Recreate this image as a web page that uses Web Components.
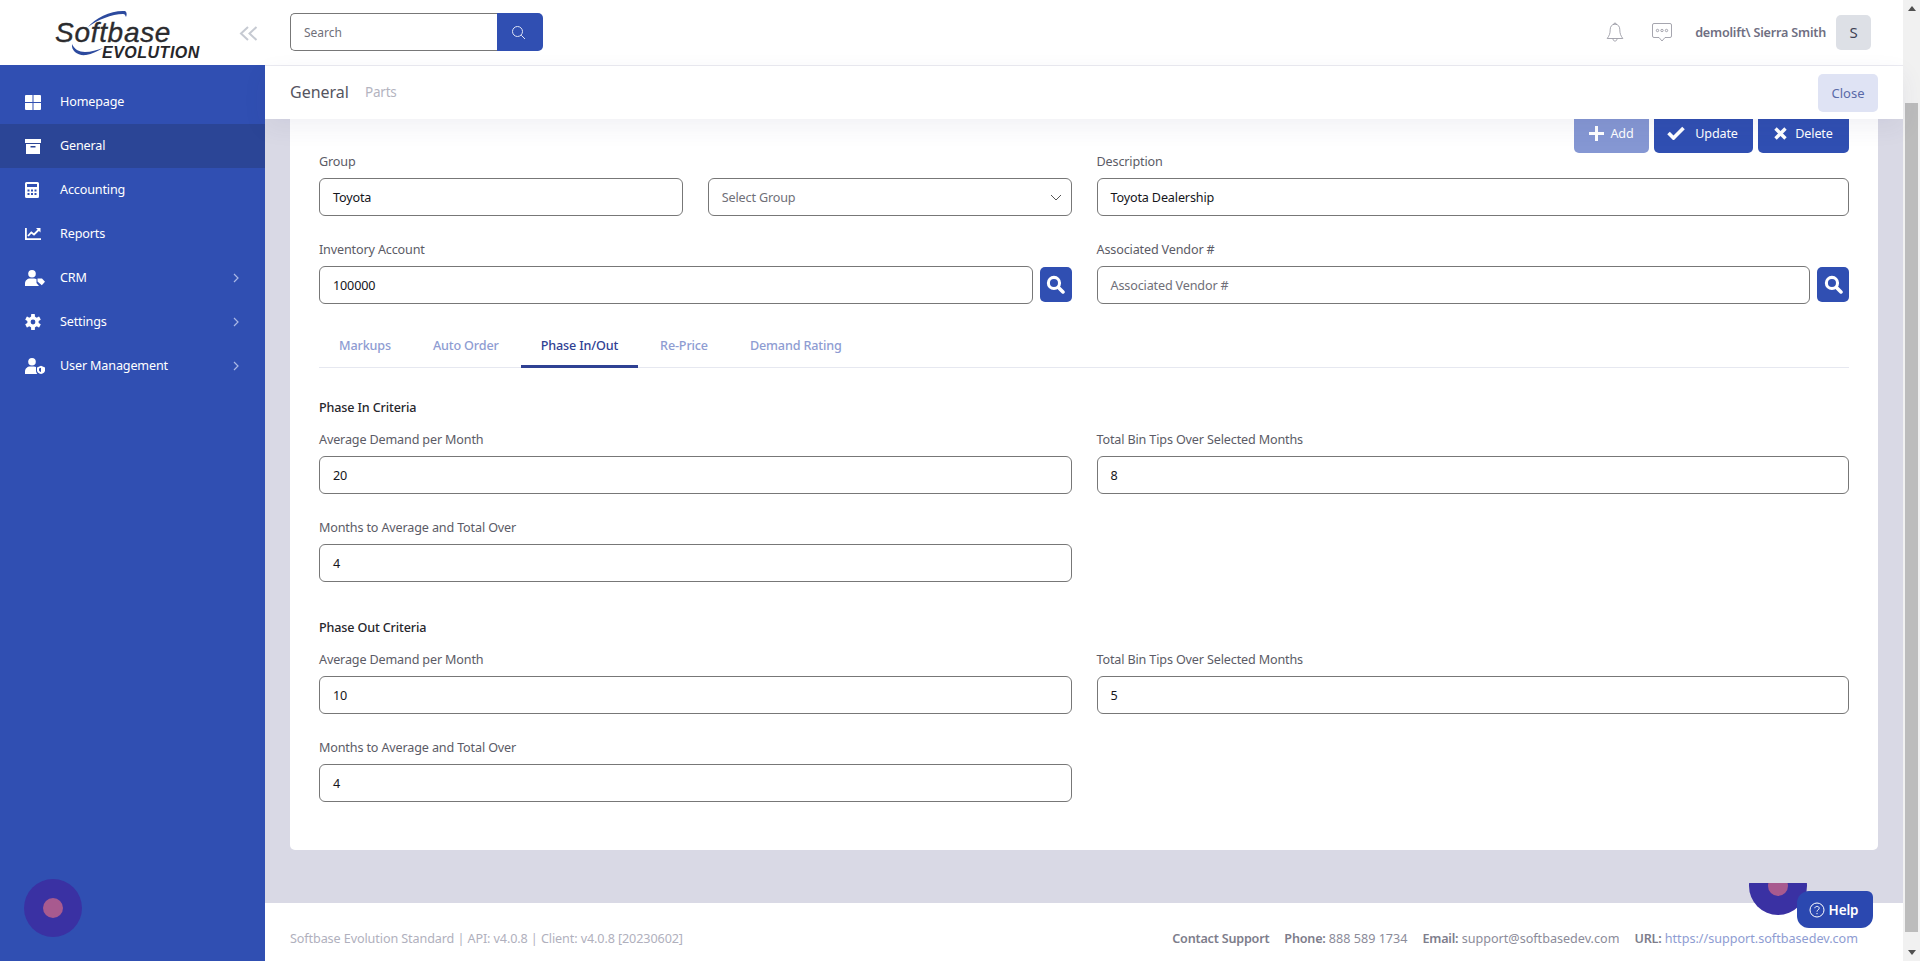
<!DOCTYPE html>
<html lang="en">
<head>
<meta charset="utf-8">
<title>Softbase Evolution</title>
<style>
  html, body { margin: 0; height: 100%; overflow: hidden; }
  body { font-family: "Noto Sans", "Open Sans", sans-serif; font-size: 12.6px; letter-spacing: -.15px; }
</style>
</head>
<body>
<sb-app>
  <sb-sidebar slot="side">
    <sb-nav-item icon="home" label="Homepage"></sb-nav-item>
    <sb-nav-item icon="box" label="General" active></sb-nav-item>
    <sb-nav-item icon="calc" label="Accounting"></sb-nav-item>
    <sb-nav-item icon="chart" label="Reports"></sb-nav-item>
    <sb-nav-item icon="crm" label="CRM" more></sb-nav-item>
    <sb-nav-item icon="cog" label="Settings" more></sb-nav-item>
    <sb-nav-item icon="shield" label="User Management" more></sb-nav-item>
  </sb-sidebar>
  <sb-topbar slot="top"></sb-topbar>
  <sb-subbar slot="sub"></sb-subbar>
  <sb-card slot="main">
    <sb-actions></sb-actions>
    <sb-row>
      <sb-row class="pair">
        <sb-field label="Group" value="Toyota"></sb-field>
        <sb-field label="&nbsp;" value="Select Group" select></sb-field>
      </sb-row>
      <sb-field label="Description" value="Toyota Dealership"></sb-field>
      <sb-field label="Inventory Account" value="100000" search></sb-field>
      <sb-field label="Associated Vendor #" placeholder="Associated Vendor #" search></sb-field>
    </sb-row>
    <sb-tabs></sb-tabs>
    <sb-heading>Phase In Criteria</sb-heading>
    <sb-row>
      <sb-field label="Average Demand per Month" value="20"></sb-field>
      <sb-field label="Total Bin Tips Over Selected Months" value="8"></sb-field>
      <sb-field label="Months to Average and Total Over" value="4"></sb-field>
    </sb-row>
    <sb-heading class="second">Phase Out Criteria</sb-heading>
    <sb-row>
      <sb-field label="Average Demand per Month" value="10"></sb-field>
      <sb-field label="Total Bin Tips Over Selected Months" value="5"></sb-field>
      <sb-field label="Months to Average and Total Over" value="4"></sb-field>
    </sb-row>
  </sb-card>
  <sb-footer slot="foot"></sb-footer>
  <sb-scrollbar slot="scroll"></sb-scrollbar>
  <sb-bubble class="left"></sb-bubble>
  <sb-help></sb-help>
</sb-app>

<script>
const ICONS = {
    home: `<svg width="16" height="15" viewBox="0 0 16 15"><path fill="#fff" d="M1 0h6.500v7H0V1a1 1 0 0 1 1-1zM8.500 0H15a1 1 0 0 1 1 1v6H8.500zM0 8h7.500v7H1a1 1 0 0 1-1-1zM8.500 8H16v6a1 1 0 0 1-1 1H8.500z"/></svg>`,
    box: `<svg width="16" height="15" viewBox="0 0 16 15"><path fill="#fff" fill-rule="evenodd" d="M0 0h16v4H0zM1 5h14v10H1zM5.500 7v1.500h5V7z"/></svg>`,
    calc: `<svg width="14" height="16" viewBox="0 0 14 16"><path fill="#fff" fill-rule="evenodd" d="M1.500 0h11A1.500 1.500 0 0 1 14 1.500v13a1.500 1.500 0 0 1-1.500 1.500h-11A1.500 1.500 0 0 1 0 14.500v-13A1.500 1.500 0 0 1 1.500 0zM2 2v3h10V2zM2.500 7.500v2h2v-2zM6 7.500v2h2v-2zM9.500 7.500v2h2v-2zM2.500 11v2h2v-2zM6 11v2h2v-2zM9.500 11v2h2v-2z"/></svg>`,
    chart: `<svg width="16" height="12" viewBox="0 0 16 12"><path fill="#fff" d="M0 0h1.800v10.200H16V12H0z"/><path fill="none" stroke="#fff" stroke-width="1.800" d="M3 8l3.300-3.500 2.700 2 5-5"/><path fill="#fff" d="M11 0h4.500v4.500z"/></svg>`,
    crm: `<svg width="20" height="16" viewBox="0 0 20 16"><circle cx="7" cy="3.800" r="3.800" fill="#fff"/><path fill="#fff" d="M0 16v-2.500C0 10.500 2.500 8.500 5 8.500h4c1 0 1.800.3 2.500.7V13l2.500 3z"/><path fill="#fff" d="M12.500 8.500H17l3 3.300-3.200 3.400-4.300-3.800z"/></svg>`,
    cog: `<svg width="16" height="16" viewBox="0 0 16 16"><g fill="#fff"><rect x="6.100" y="0" width="3.800" height="16" rx=".6"/><rect x="6.100" y="0" width="3.800" height="16" rx=".6" transform="rotate(60 8 8)"/><rect x="6.100" y="0" width="3.800" height="16" rx=".6" transform="rotate(120 8 8)"/></g><circle cx="8" cy="8" r="4.200" fill="none" stroke="#fff" stroke-width="3"/><circle cx="8" cy="8" r="2.400" fill="#304fb2"/></svg>`,
    shield: `<svg width="20" height="16" viewBox="0 0 20 16"><circle cx="7" cy="3.800" r="3.800" fill="#fff"/><path fill="#fff" d="M0 16v-2.500C0 10.500 2.500 8.500 5 8.500h4c.8 0 1.500.2 2 .5v3.500c0 1.300.5 2.500 1.300 3.500z"/><path fill="#fff" d="M16 7.800l4 1.600v3c0 1.800-1.700 3-4 3.600-2.300-.6-4-1.800-4-3.600v-3z"/><path fill="#304fb2" d="M16 9.800v4.300c-1.100-.4-2-1-2-2v-1.500z"/></svg>`,
    search: `<svg width="19" height="19" viewBox="0 0 16 16"><circle cx="6.700" cy="6.700" r="4.700" fill="none" stroke="#fff" stroke-width="2.600"/><path stroke="#fff" stroke-width="3" stroke-linecap="round" d="M10.500 10.500 14.300 14.300"/></svg>`,
};

// Small base class: each element hands back its own styles and markup
class SbElement extends HTMLElement {
    constructor() {
        super();
        this.attachShadow({mode: 'open'});
    }

    connectedCallback() {
        const template = document.createElement('template');
        template.innerHTML = this.template();
        this.shadowRoot.appendChild(template.content.cloneNode(true));
    }
}

class SbApp extends SbElement {
    template() {
        return `
        <style>
          :host {
             display: grid;
             grid-template-columns: 265px 1fr 17px;
             grid-template-rows: 66px 53px 1fr 58px;
             height: 961px;
             position: relative;
             overflow: hidden;
             background: #d9d9e5;
          }
          ::slotted([slot=side]) { grid-column: 1; grid-row: 1 / 5; }
          ::slotted([slot=top]) { grid-column: 2; grid-row: 1; z-index: 2; }
          ::slotted([slot=sub]) { grid-column: 2; grid-row: 2; z-index: 2; }
          ::slotted([slot=foot]) { grid-column: 2; grid-row: 4; }
          ::slotted([slot=scroll]) { grid-column: 3; grid-row: 1 / 5; }
          #content {
             grid-column: 2;
             grid-row: 3;
             overflow: hidden;
             min-height: 0;
             display: flex;
             flex-direction: column;
             justify-content: flex-end;
             padding: 0 25px 53px;
          }
        </style>
        <slot name="side"></slot>
        <slot name="top"></slot>
        <slot name="sub"></slot>
        <div id="content"><slot name="main"></slot></div>
        <slot name="foot"></slot>
        <slot name="scroll"></slot>
        <slot></slot>
        `;
    }
}

class SbSidebar extends SbElement {
    template() {
        return `
        <style>
          :host { display: flex; flex-direction: column; background: #304fb2; }
          #brand {
             height: 65px;
             background: #fff;
             display: flex;
             flex: none;
          }
          nav { padding-top: 15px; display: flex; flex-direction: column; }
        </style>
        <div id="brand">
          <svg width="265" height="65" viewBox="0 0 265 65">
            <path fill="#2c4a9e" d="M88 27C95 18 112 10 125 11c2 1 2 4 1 6-1-2-1-3-3-3-11 0-26 6-35 13z"/>
            <path fill="#2c4a9e" d="M72 44c-1 7 6 12 14 11 6-1 12-4 17-7-6 2-12 4-18 4-6 0-11-3-13-8z"/>
            <text x="55" y="42" font-family="Liberation Sans" font-style="italic" font-size="28" fill="#2b2b2e" stroke="#2b2b2e" stroke-width=".35" letter-spacing=".7">Softbase</text>
            <text x="102" y="58" font-family="Liberation Sans" font-style="italic" font-weight="700" font-size="16" fill="#26262a" letter-spacing=".5">EVOLUTION</text>
            <path fill="none" stroke="#c6cad2" stroke-width="2" d="M248 27l-7 6.500 7 6.500M256.500 27l-7 6.500 7 6.500"/>
          </svg>
        </div>
        <nav><slot></slot></nav>
        `;
    }
}

class SbNavItem extends SbElement {
    template() {
        const more = this.hasAttribute('more')
            ? `<svg id="more" width="6" height="10" viewBox="0 0 6 10"><path fill="none" stroke="#aab8e6" stroke-width="1.200" d="M1 1l4 4-4 4"/></svg>`
            : '';
        return `
        <style>
          :host {
             display: flex;
             align-items: center;
             height: 44px;
             padding-left: 25px;
             color: #fff;
             background: ${this.hasAttribute('active') ? '#2b4596' : 'transparent'};
          }
          #icon { width: 35px; display: flex; align-items: center; flex: none; }
          #text { flex: 1; padding-bottom: 2px; }
          #more { margin-right: 26px; }
        </style>
        <span id="icon">${ICONS[this.getAttribute('icon')]}</span>
        <span id="text">${this.getAttribute('label')}</span>
        ${more}
        `;
    }
}

class SbTopbar extends SbElement {
    template() {
        return `
        <style>
          :host {
             display: flex;
             align-items: center;
             background: #fff;
             border-bottom: 1px solid #ebebf1;
             padding: 0 32px 1px 25px;
             box-sizing: border-box;
          }
          #search { display: flex; width: 253px; height: 38px; }
          #box {
             flex: 1;
             border: 1px solid #777;
             border-right: 0;
             border-radius: 5px 0 0 5px;
             padding-left: 13px;
             color: #70707a;
             font-size: 12px;
             letter-spacing: 0;
             display: flex;
             align-items: center;
          }
          #go {
             width: 46px;
             padding-right: 4px;
             box-sizing: border-box;
             background: #304fb2;
             border-radius: 0 5px 5px 0;
             display: flex;
             align-items: center;
             justify-content: center;
          }
          #user { margin-left: auto; display: flex; align-items: center; }
          #bell { margin-right: 28px; }
          #chat { margin-right: 23px; }
          #name { color: #6f6f82; font-weight: 600; letter-spacing: -.2px; margin-right: 10px; }
          #avatar {
             width: 35px;
             height: 35px;
             background: #dde0e6;
             border-radius: 5px;
             color: #3f4254;
             font-size: 15px;
             display: flex;
             align-items: center;
             justify-content: center;
          }
        </style>
        <div id="search">
          <div id="box">Search</div>
          <div id="go">
            <svg width="15" height="15" viewBox="0 0 15 15" fill="none" stroke="#dfe5f7"><circle cx="6.500" cy="6.500" r="5"/><path d="M10.200 10.200 14 14"/></svg>
          </div>
        </div>
        <div id="user">
          <svg id="bell" width="18" height="21" viewBox="0 0 18 21" fill="none" stroke="#8f8f9b" stroke-width=".8"><path d="M9 2.200c-3.300 0-4.800 2.500-4.800 5.500 0 4-1 6-3 8.800h15.600c-2-2.800-3-4.800-3-8.800 0-3-1.500-5.500-4.800-5.500zM7.500 2.500C7.500 .6 10.500 .6 10.500 2.500M7 16.800c0 3 4 3 4 0"/></svg>
          <svg id="chat" width="20" height="19" viewBox="0 0 20 19" fill="none" stroke="#8f8f9b" stroke-width=".8"><path d="M2 .5h16A1.500 1.500 0 0 1 19.500 2v11a1.500 1.500 0 0 1-1.500 1.500h-5L10 18l-3-3.500H2A1.500 1.500 0 0 1 .5 13V2A1.500 1.500 0 0 1 2 .5z"/><circle cx="5.500" cy="7.500" r="1.200"/><circle cx="10" cy="7.500" r="1.200"/><circle cx="14.500" cy="7.500" r="1.200"/></svg>
          <span id="name">demolift\\ Sierra Smith</span>
          <div id="avatar">S</div>
        </div>
        `;
    }
}

class SbSubbar extends SbElement {
    template() {
        return `
        <style>
          :host {
             display: flex;
             align-items: center;
             background: #fff;
             padding: 0 25px;
             box-shadow: 0 8px 24px rgba(60, 60, 110, .07);
          }
          #title { color: #55555f; font-size: 16px; letter-spacing: 0; margin-right: 16px; padding-bottom: 2px; }
          #parts { color: #b4b4bf; font-size: 13.5px; letter-spacing: -.2px; padding-bottom: 2px; }
          #close {
             margin-left: auto;
             width: 60px;
             height: 38px;
             background: #dfe3f4;
             color: #5a6aa8;
             border-radius: 5px;
             font-size: 13px;
             letter-spacing: 0;
             display: flex;
             align-items: center;
             justify-content: center;
          }
        </style>
        <span id="title">General</span>
        <span id="parts">Parts</span>
        <div id="close">Close</div>
        `;
    }
}

class SbCard extends SbElement {
    template() {
        return `
        <style>
          :host {
             display: block;
             flex: none;
             background: #fff;
             border-radius: 5px;
             padding: 40px 29px 26px;
          }
        </style>
        <slot></slot>
        `;
    }
}

class SbActions extends SbElement {
    template() {
        return `
        <style>
          :host { display: flex; justify-content: flex-end; gap: 5px; height: 40px; margin-bottom: -3px; position: relative; }
          .btn {
             display: flex;
             align-items: center;
             justify-content: center;
             height: 40px;
             background: #304fb2;
             color: #fff;
             border-radius: 5px;
             box-sizing: border-box;
          }
          #add { width: 75px; background: #8597d3; gap: 6px; }
          #update { width: 99px; gap: 10px; padding-right: 2px; }
          #delete { width: 91px; gap: 8px; }
        </style>
        <div class="btn" id="add"><svg width="15" height="15" viewBox="0 0 15 15"><path fill="#fff" d="M6 0h3v6h6v3H9v6H6V9H0V6h6z"/></svg>Add</div>
        <div class="btn" id="update"><svg width="18" height="14" viewBox="0 0 18 14"><path fill="none" stroke="#fff" stroke-width="3.600" d="M1.500 7l5 5L16.500 2"/></svg>Update</div>
        <div class="btn" id="delete"><svg width="13" height="13" viewBox="0 0 13 13"><path fill="none" stroke="#fff" stroke-width="3.400" d="M1.500 1.500l10 10M11.500 1.500l-10 10"/></svg>Delete</div>
        `;
    }
}

class SbRow extends SbElement {
    template() {
        return `
        <style>
          :host { display: grid; grid-template-columns: 1fr 1fr; column-gap: 25px; min-width: 0; }
        </style>
        <slot></slot>
        `;
    }
}

class SbField extends SbElement {
    template() {
        const placeholder = this.getAttribute('placeholder');
        const text = this.getAttribute('value') || placeholder || '';
        const isSelect = this.hasAttribute('select');
        const chevron = isSelect
            ? `<svg width="12" height="7" viewBox="0 0 12 7"><path fill="none" stroke="#555" stroke-width="1" d="M1 1l5 5 5-5"/></svg>`
            : '';
        const search = this.hasAttribute('search')
            ? `<div id="find">${ICONS.search}</div>`
            : '';
        return `
        <style>
          :host { display: block; margin-bottom: 22px; min-width: 0; }
          label { display: block; height: 23px; line-height: 23px; margin-bottom: 5px; color: #5b5b66; white-space: nowrap; }
          #line { display: flex; gap: 7px; }
          #input {
             flex: 1;
             height: 38px;
             box-sizing: border-box;
             border: 1px solid #777;
             border-radius: 6px;
             padding: 0 ${isSelect ? 9 : 12}px 0 13px;
             display: flex;
             align-items: center;
             justify-content: space-between;
             color: ${placeholder || isSelect ? '#6f6f78' : '#15151a'};
             background: #fff;
          }
          #find {
             width: 32px;
             height: 35px;
             margin-top: 1px;
             background: #304fb2;
             border-radius: 5px;
             display: flex;
             align-items: center;
             justify-content: center;
             flex: none;
          }
        </style>
        <label>${this.getAttribute('label')}</label>
        <div id="line">
          <div id="input" role="textbox"><span>${text}</span>${chevron}</div>
          ${search}
        </div>
        `;
    }
}

class SbTabs extends SbElement {
    template() {
        const tabs = ['Markups', 'Auto Order', 'Phase In/Out', 'Re-Price', 'Demand Rating'];
        return `
        <style>
          :host { display: flex; gap: 2px; border-bottom: 1px solid #e6e8f0; height: 42px; margin: -1px 0 30px; }
          span {
             padding: 11px 20px 0;
             height: 43px;
             box-sizing: border-box;
             line-height: 20px;
             color: #8e9cd2;
             font-weight: 500;
             border-bottom: 3px solid transparent;
          }
          span.on { color: #2f4193; border-bottom-color: #2f4193; }
        </style>
        ${tabs.map(t => `<span class="${t === 'Phase In/Out' ? 'on' : ''}">${t}</span>`).join('')}
        `;
    }
}

class SbHeading extends SbElement {
    template() {
        return `
        <style>
          :host {
             display: block;
             height: 20px;
             line-height: 20px;
             margin-bottom: 10px;
             color: #26262c;
             font-weight: 500;
          }
          :host(.second) { margin-top: 14px; }
        </style>
        <slot></slot>
        `;
    }
}

class SbFooter extends SbElement {
    template() {
        return `
        <style>
          :host {
             display: flex;
             align-items: center;
             justify-content: space-between;
             background: #fff;
             padding: 12px 45px 0 25px;
             color: #b0b0bd;
             letter-spacing: -.1px;
             white-space: nowrap;
          }
          #contact { display: flex; gap: 15px; color: #8b8b99; letter-spacing: 0; }
          b { font-weight: 600; color: #7d7d8b; letter-spacing: -.2px; }
          a { color: #8e9cd2; text-decoration: none; }
        </style>
        <span>Softbase Evolution Standard | API: v4.0.8 | Client: v4.0.8 [20230602]</span>
        <span id="contact">
          <b>Contact Support</b>
          <span><b>Phone:</b> 888 589 1734</span>
          <span><b>Email:</b> support@softbasedev.com</span>
          <span><b>URL:</b> <a>https://support.softbasedev.com</a></span>
        </span>
        `;
    }
}

class SbScrollbar extends SbElement {
    template() {
        return `
        <style>
          :host {
             display: flex;
             flex-direction: column;
             background: #f1f1f1;
             align-items: center;
          }
          .arrow { height: 17px; flex: none; display: flex; align-items: center; justify-content: center; }
          #track { flex: 1; width: 100%; padding-top: 86px; padding-bottom: 12px; box-sizing: border-box; display: flex; justify-content: center; }
          #thumb { width: 13px; height: 100%; background: #bcbcbc; }
        </style>
        <div class="arrow"><svg width="8" height="5" viewBox="0 0 8 5"><path fill="#505050" d="M4 0l4 5H0z"/></svg></div>
        <div id="track"><div id="thumb"></div></div>
        <div class="arrow"><svg width="8" height="5" viewBox="0 0 8 5"><path fill="#505050" d="M4 5L0 0h8z"/></svg></div>
        `;
    }
}

// Chat launcher: the left one is whole, the right one is cut off by its frame
class SbBubble extends SbElement {
    template() {
        return `
        <style>
          :host {
             position: absolute;
             left: 24px;
             top: 879px;
             width: 58px;
             height: 58px;
             border-radius: 50%;
             background: #3a31a3;
             display: flex;
             align-items: center;
             justify-content: center;
          }
          #dot { width: 20px; height: 20px; border-radius: 50%; background: #a85a8f; }
        </style>
        <div id="dot"></div>
        `;
    }
}

class SbHelp extends SbElement {
    template() {
        return `
        <style>
          :host {
             position: absolute;
             left: 1749px;
             top: 883px;
             width: 124px;
             height: 45px;
          }
          #clip { position: absolute; left: 0; top: 0; width: 58px; height: 32px; overflow: hidden; }
          #circle {
             position: absolute;
             left: 0;
             top: -26px;
             width: 58px;
             height: 58px;
             border-radius: 50%;
             background: #3a31a3;
             display: flex;
             align-items: center;
             justify-content: center;
          }
          #dot { width: 20px; height: 20px; border-radius: 50%; background: #a85a8f; }
          #help {
             position: absolute;
             left: 48px;
             top: 8px;
             width: 76px;
             height: 37px;
             box-sizing: border-box;
             background: #2b48b0;
             border-radius: 12px 6px 12px 12px;
             color: #fff;
             font-size: 13.5px;
             font-weight: 600;
             display: flex;
             align-items: center;
             justify-content: center;
             gap: 4px;
             padding-right: 3px;
          }
        </style>
        <div id="clip"><div id="circle"><div id="dot"></div></div></div>
        <div id="help">
          <svg width="16" height="16" viewBox="0 0 16 16" fill="none" stroke="#fff" stroke-width="1"><circle cx="8" cy="8" r="7"/><path d="M5.800 6.200C6 3.800 10.200 3.800 10.200 6.200c0 1.700-2.200 1.600-2.200 3.400"/><path d="M8 11v1.200"/></svg>
          <span>Help</span>
        </div>
        `;
    }
}

window.customElements.define('sb-app', SbApp);
window.customElements.define('sb-sidebar', SbSidebar);
window.customElements.define('sb-nav-item', SbNavItem);
window.customElements.define('sb-topbar', SbTopbar);
window.customElements.define('sb-subbar', SbSubbar);
window.customElements.define('sb-card', SbCard);
window.customElements.define('sb-actions', SbActions);
window.customElements.define('sb-row', SbRow);
window.customElements.define('sb-field', SbField);
window.customElements.define('sb-tabs', SbTabs);
window.customElements.define('sb-heading', SbHeading);
window.customElements.define('sb-footer', SbFooter);
window.customElements.define('sb-scrollbar', SbScrollbar);
window.customElements.define('sb-bubble', SbBubble);
window.customElements.define('sb-help', SbHelp);
</script>
</body>
</html>
